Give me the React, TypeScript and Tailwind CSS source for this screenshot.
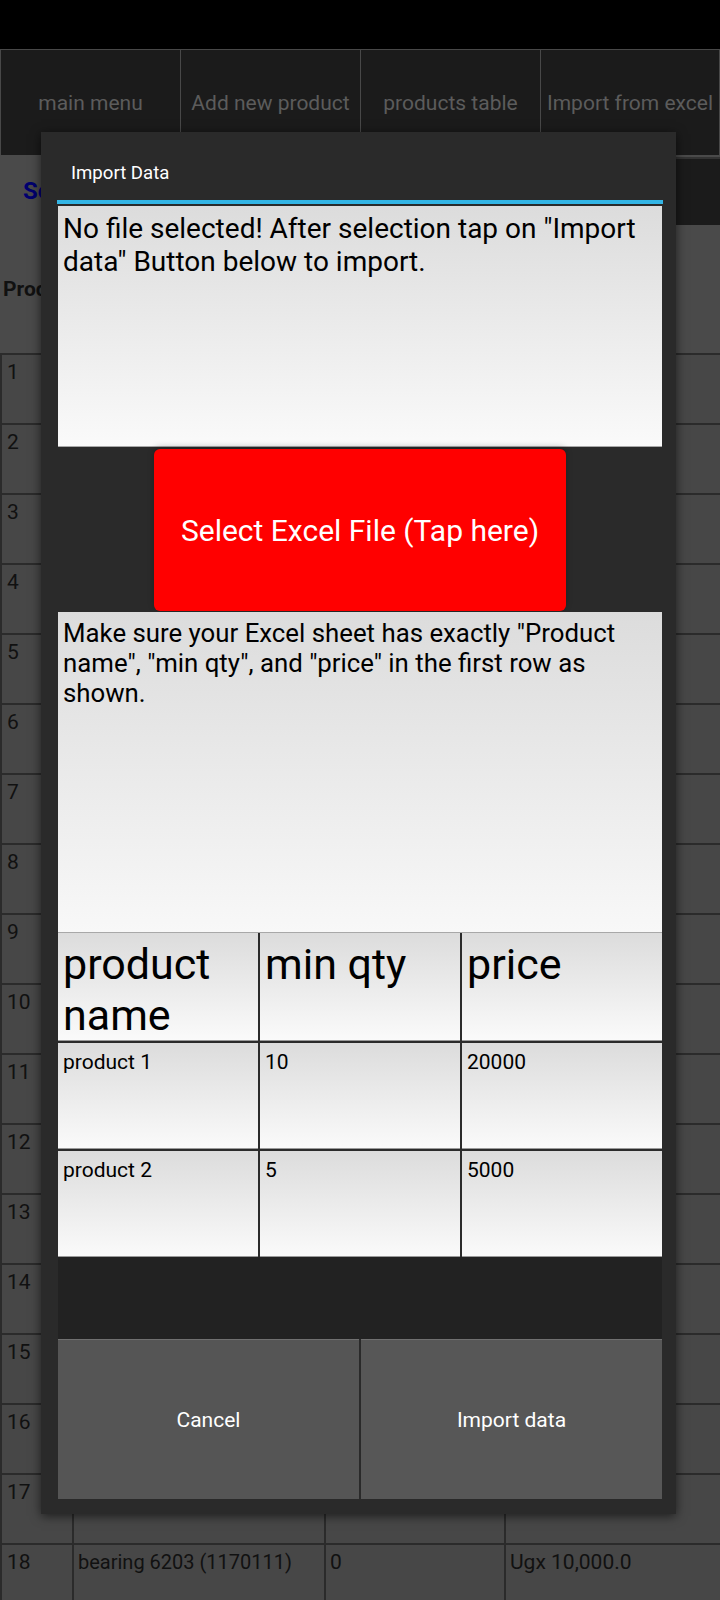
import React from "react";

const tabs = ["main menu", "Add new product", "products table", "Import from excel"];

function BgRow({ n, name = "", qty = "", price = "" }: { n: number; name?: string; qty?: string; price?: string }) {
  return (
    <div className="grid h-[70px] grid-cols-[72px_252px_180px_216px] border-t-2 border-[#2b2b2b]">
      <div className="border-l-2 border-[#2b2b2b] bg-[#474747] pl-[5px] pt-[5px] text-[21px] leading-[25px] text-[#111]">{n}</div>
      <div className="border-l-2 border-[#2b2b2b] bg-[#474747] pl-[4px] pt-[5px] text-[20px] leading-[25px] text-[#111]">{name}</div>
      <div className="border-l-2 border-[#2b2b2b] bg-[#474747] pl-[4px] pt-[5px] text-[21px] leading-[25px] text-[#111]">{qty}</div>
      <div className="border-l-2 border-[#2b2b2b] bg-[#474747] pl-[4px] pt-[5px] text-[21px] leading-[25px] text-[#111]">{price}</div>
    </div>
  );
}

export default function App() {
  const rows = Array.from({ length: 18 }, (_, i) => i + 1);
  return (
    <div className="relative h-[1600px] w-[720px] overflow-hidden bg-[#4a4a4a] font-['Roboto',sans-serif]">
      {/* status bar */}
      <div className="h-[49px] bg-black" />
      {/* tabs */}
      <div className="flex h-[106px]">
        {tabs.map((t, i) => (
          <div
            key={t}
            className={`flex w-[180px] items-center justify-center border-t border-l border-[#484848] bg-[#1b1b1b] pt-[3px] text-[21px] text-[#5c5c5c] ${i === 3 ? "border-r" : ""}`}
          >
            {t}
          </div>
        ))}
      </div>
      {/* search row */}
      <div className="flex h-[72px] items-center justify-between">
        <div className="pl-[23px] text-[24px] font-bold text-[#00006e]">Search</div>
        <div className="h-[68px] w-[216px] border-t-2 border-[#333] bg-[#1b1b1b]" />
      </div>
      {/* header row */}
      <div className="flex h-[126px] items-center pl-[3px] text-[21px] font-bold text-[#111]">
        Product name
      </div>
      {/* rows */}
      <div>
        {rows.map((n) =>
          n === 18 ? (
            <BgRow key={n} n={n} name="bearing 6203 (1170111)" qty="0" price="Ugx 10,000.0" />
          ) : (
            <BgRow key={n} n={n} />
          )
        )}
      </div>

      {/* dialog */}
      <div className="absolute left-[41px] top-[132px] w-[635px] bg-[#2a2a2a] shadow-[0_2px_10px_rgba(0,0,0,0.6)]">
        <div className="h-[68px] pl-[30px] pt-[30px] text-[18.6px] leading-[23px] text-white">Import Data</div>
        <div className="ml-[16px] h-[4px] w-[606px] bg-[#33b5e5]" />
        <div className="h-[2px]" />
        <div className="pl-[17px] pr-[14px]">
          <div className="h-[241px] border-b border-[#a8a8a8] bg-linear-to-b from-[#dcdcdc] to-[#fafafa] pl-[5px] pt-[6px] text-[28px] leading-[33px] text-black">
            No file selected! After selection tap on "Import data" Button below to import.
          </div>
          <div className="mx-auto mt-[2px] flex h-[162px] w-[412px] items-center justify-center rounded-[6px] bg-[#ff0000] text-[30px] text-white shadow-[0_-2px_6px_rgba(0,0,0,0.25)]">
            Select Excel File (Tap here)
          </div>
          <div className="mt-[1px] h-[321px] border-b border-[#a8a8a8] bg-linear-to-b from-[#dcdcdc] to-[#f8f8f8] pl-[5px] pt-[6px] text-[25.8px] leading-[30px] text-black">
            Make sure your Excel sheet has exactly "Product name", "min qty", and "price" in the first row as shown.
          </div>
          <div className="grid grid-cols-3 grid-rows-[108px_106px_106px] gap-[2px] bg-[#2b2b2b]">
            {["product name", "min qty", "price"].map((h) => (
              <div key={h} className="border-b border-[#9a9a9a] bg-linear-to-b from-[#dcdcdc] to-[#fafafa] pl-[5px] pt-[6px] text-[43px] leading-[51px] text-black">
                {h}
              </div>
            ))}
            {[
              ["product 1", "10", "20000"],
              ["product 2", "5", "5000"],
            ].map((r) =>
              r.map((c, j) => (
                <div key={r[0] + j} className="border-b border-[#9a9a9a] bg-linear-to-b from-[#dcdcdc] to-[#fafafa] pl-[5px] pt-[7px] text-[21px] leading-[25px] text-black">
                  {c}
                </div>
              ))
            )}
          </div>
          <div className="h-[82px] bg-[#222222]" />
          <div className="flex h-[160px] gap-[2px]">
            <div className="flex flex-1 items-center justify-center border-t border-[#707070] bg-[#555555] pt-[3px] text-[21px] text-white">Cancel</div>
            <div className="flex flex-1 items-center justify-center border-t border-[#707070] bg-[#575757] pt-[3px] text-[21px] text-white">Import data</div>
          </div>
          <div className="h-[15px]" />
        </div>
      </div>
    </div>
  );
}
